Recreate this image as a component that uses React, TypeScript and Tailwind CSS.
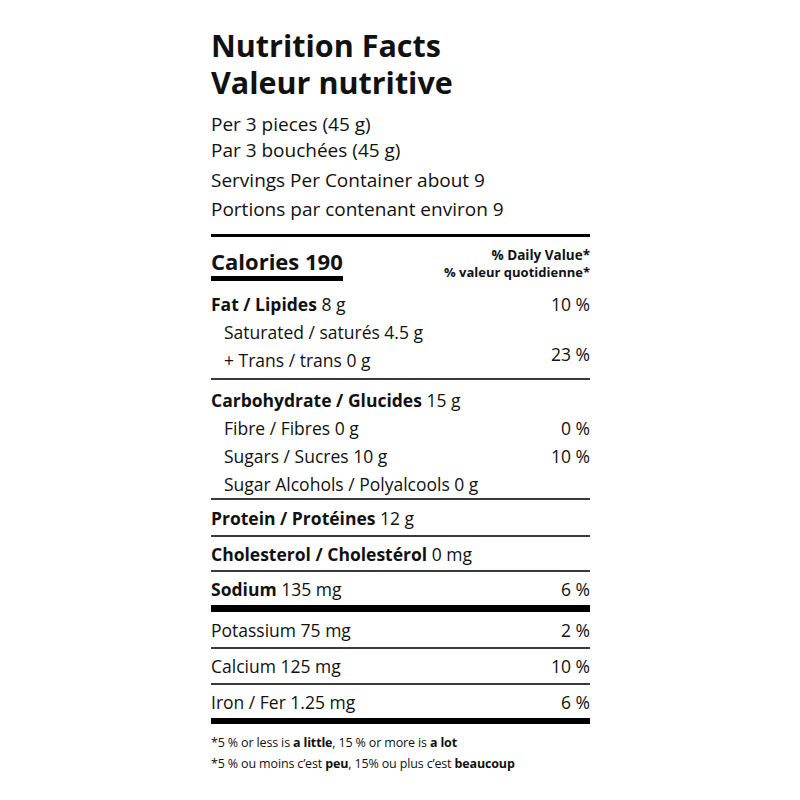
const thin = 'h-[2px] bg-[#3a3a3a]';

function Row({ label, value, pct, indent }: { label?: string; value: string; pct?: string; indent?: boolean }) {
  return (
    <div className={`flex justify-between leading-[28px] ${indent ? 'pl-[13px]' : ''}`}>
      <span>
        {label && <b className="font-bold">{label} </b>}
        {value}
      </span>
      {pct && <span>{pct}</span>}
    </div>
  );
}

function Band({ children, h }: { children: React.ReactNode; h: string }) {
  return <div className={`flex flex-col justify-center ${h}`}>{children}</div>;
}

export default function App() {
  return (
    <div className="min-h-screen bg-white text-[#111] font-['Open_Sans',sans-serif]">
      <div className="mx-auto w-[380px] pt-[27px] pl-px">
        {/* Heading */}
        <h1 className="text-[30.5px] leading-[37px] font-bold">
          Nutrition Facts
          <br />
          Valeur nutritive
        </h1>

        <div className="mt-[10px] text-[19px] leading-[26px]">
          <p>Per 3 pieces (45 g)</p>
          <p>Par 3 bouchées (45 g)</p>
          <p className="mt-[4px]">Servings Per Container about 9</p>
          <p className="mt-[3px]">Portions par contenant environ 9</p>
        </div>

        <div className="mt-[12px] h-[3px] bg-black" />

        {/* Calories */}
        <div className="flex justify-between items-start pt-[10px]">
          <div className="w-fit mt-[1px]">
            <div className="text-[22px] leading-[26px] font-bold">Calories 190</div>
            <div className="mt-[2px] h-[5px] bg-black" />
          </div>
          <div className="text-right font-bold">
            <div className="text-[13.5px] leading-[17px]">% Daily Value*</div>
            <div className="text-[13px] leading-[16px]">% valeur quotidienne*</div>
          </div>
        </div>

        {/* Fat */}
        <div className="mt-[9px] text-[17.5px]">
          <Row label="Fat / Lipides" value="8 g" pct="10 %" />
          <div className="flex justify-between items-end">
            <div>
              <Row indent value="Saturated / saturés 4.5 g" />
              <Row indent value="+ Trans / trans 0 g" />
            </div>
            <span className="leading-[28px] mb-[6px]">23 %</span>
          </div>
        </div>
        <div className={`mt-[4px] ${thin}`} />

        {/* Carbohydrate */}
        <div className="mt-[6px] text-[17.5px]">
          <Row label="Carbohydrate / Glucides" value="15 g" />
          <Row indent value="Fibre / Fibres 0 g" pct="0 %" />
          <Row indent value="Sugars / Sucres 10 g" pct="10 %" />
          <Row indent value="Sugar Alcohols / Polyalcools 0 g" />
        </div>
        <div className={thin} />

        <div className="text-[17.5px]">
          <Band h="h-[35px]">
            <Row label="Protein / Protéines" value="12 g" />
          </Band>
          <div className={thin} />
          <Band h="h-[33px]">
            <Row label="Cholesterol / Cholestérol" value="0 mg" />
          </Band>
          <div className={thin} />
          <Band h="h-[33px]">
            <Row label="Sodium" value="135 mg" pct="6 %" />
          </Band>
          <div className="h-[7px] bg-black" />
          <Band h="h-[35px]">
            <Row value="Potassium 75 mg" pct="2 %" />
          </Band>
          <div className={thin} />
          <Band h="h-[34px]">
            <Row value="Calcium 125 mg" pct="10 %" />
          </Band>
          <div className={thin} />
          <Band h="h-[33px]">
            <Row value="Iron / Fer 1.25 mg" pct="6 %" />
          </Band>
          <div className="h-[6px] bg-black" />
        </div>

        {/* Footnote */}
        <div className="mt-[8px] text-[12.5px] leading-[21px] tracking-[-0.15px]">
          <p>
            *5 % or less is <b className="font-bold">a little</b>, 15 % or more is <b className="font-bold">a lot</b>
          </p>
          <p>
            *5 % ou moins c’est <b className="font-bold">peu</b>, 15% ou plus c’est <b className="font-bold">beaucoup</b>
          </p>
        </div>
      </div>
    </div>
  );
}
